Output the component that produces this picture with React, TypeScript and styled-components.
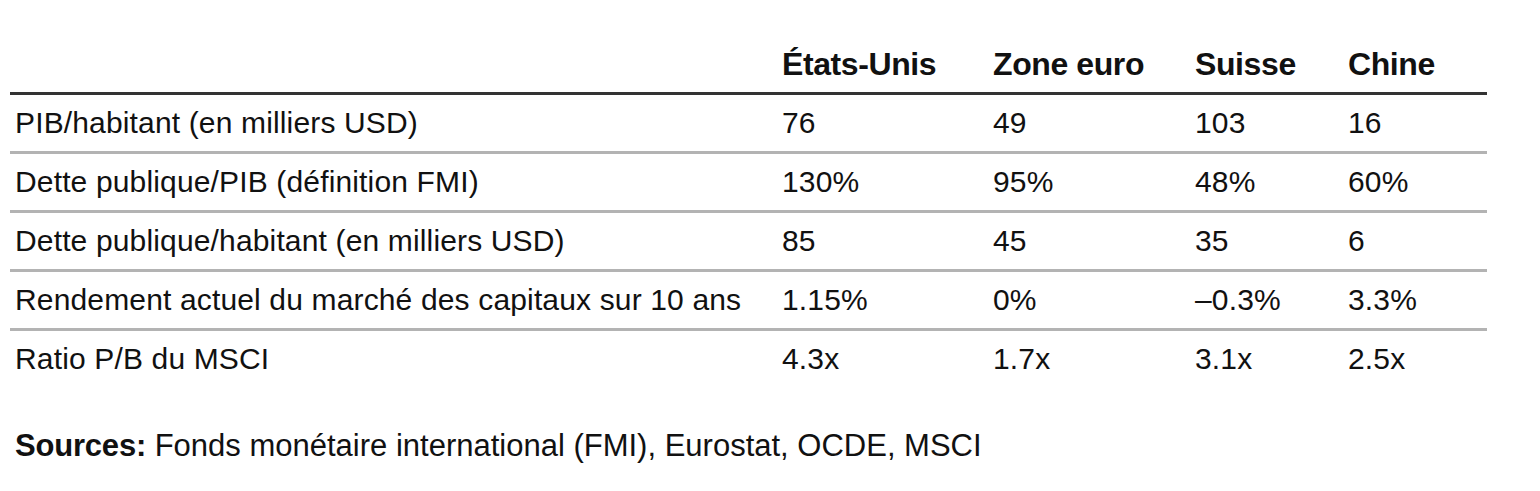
import React from "react";
import styled, { createGlobalStyle } from "styled-components";

const GlobalStyle = createGlobalStyle`
  html, body {
    margin: 0;
    padding: 0;
    background: #ffffff;
  }
  body {
    font-family: "Liberation Sans", Arial, sans-serif;
    color: #111111;
  }
`;

const Page = styled.div`
  width: 1540px;
  height: 491px;
  padding: 36px 0 0 10px;
  box-sizing: border-box;
  overflow: hidden;
`;

const Table = styled.div`
  width: 1477px;
  display: grid;
  grid-template-columns: 772px 211px 202px 153px 1fr;
`;

const HeadCell = styled.div<{ first?: boolean }>`
  font-size: 32px;
  font-weight: 700;
  letter-spacing: -0.4px;
  line-height: 56px;
  padding-left: ${(p) => (p.first ? "5px" : "0")};
  border-bottom: 3px solid #333333;
`;

const Cell = styled.div<{ first?: boolean; last?: boolean }>`
  font-size: 30px;
  font-weight: 400;
  letter-spacing: 0.15px;
  line-height: 56px;
  height: 56px;
  padding-left: ${(p) => (p.first ? "5px" : "0")};
  border-bottom: ${(p) => (p.last ? "3px solid transparent" : "3px solid #b3b3b3")};
  white-space: nowrap;
`;

const Sources = styled.p`
  margin: 39px 0 0 5px;
  font-size: 31px;
  line-height: 34px;

  b {
    font-weight: 700;
    letter-spacing: -0.2px;
  }
`;

const columns = ["États-Unis", "Zone euro", "Suisse", "Chine"];

const rows: [string, string[]][] = [
  ["PIB/habitant (en milliers USD)", ["76", "49", "103", "16"]],
  ["Dette publique/PIB (définition FMI)", ["130%", "95%", "48%", "60%"]],
  ["Dette publique/habitant (en milliers USD)", ["85", "45", "35", "6"]],
  ["Rendement actuel du marché des capitaux sur 10 ans", ["1.15%", "0%", "–0.3%", "3.3%"]],
  ["Ratio P/B du MSCI", ["4.3x", "1.7x", "3.1x", "2.5x"]],
];

export default function App() {
  return (
    <>
      <GlobalStyle />
      <Page>
        <Table>
          <HeadCell first />
          {columns.map((c) => (
            <HeadCell key={c}>{c}</HeadCell>
          ))}
          {rows.map(([label, values], i) => {
            const last = i === rows.length - 1;
            return (
              <React.Fragment key={label}>
                <Cell first last={last}>
                  {label}
                </Cell>
                {values.map((v, j) => (
                  <Cell key={j} last={last}>
                    {v}
                  </Cell>
                ))}
              </React.Fragment>
            );
          })}
        </Table>
        <Sources>
          <b>Sources:</b> Fonds monétaire international (FMI), Eurostat, OCDE, MSCI
        </Sources>
      </Page>
    </>
  );
}
